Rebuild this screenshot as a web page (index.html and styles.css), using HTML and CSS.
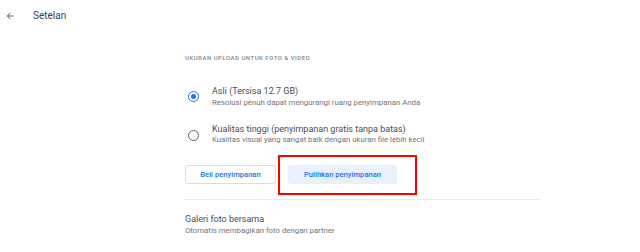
FILE: index.html
```html
<!DOCTYPE html>
<html lang="id">
<head>
  <meta charset="UTF-8">
  <meta name="viewport" content="width=device-width, initial-scale=1.0">
  <title>Setelan</title>
  <link rel="stylesheet" href="styles.css">
</head>
<body>
  <!-- Top bar -->
  <header class="topbar">
    <svg class="back-icon" viewBox="0 0 24 24" width="10" height="10" aria-hidden="true">
      <path d="M20 11H7.83l5.59-5.59L12 4l-8 8 8 8 1.41-1.41L7.83 13H20v-2z" fill="#5f6368"/>
    </svg>
    <span class="page-title">Setelan</span>
  </header>

  <main class="content">
    <h2 class="section-label">Ukuran upload untuk foto &amp; video</h2>

    <!-- Upload size options -->
    <div class="option option-first">
      <span class="radio radio-checked"></span>
      <div class="option-text">
        <div class="option-title">Asli (Tersisa 12.7 GB)</div>
        <div class="option-sub">Resolusi penuh dapat mengurangi ruang penyimpanan Anda</div>
      </div>
    </div>

    <div class="option">
      <span class="radio"></span>
      <div class="option-text">
        <div class="option-title">Kualitas tinggi (penyimpanan gratis tanpa batas)</div>
        <div class="option-sub">Kualitas visual yang sangat baik dengan ukuran file lebih kecil</div>
      </div>
    </div>

    <div class="actions">
      <button class="btn btn-outline">Beli penyimpanan</button>
      <div class="highlight-wrap">
        <button class="btn btn-tonal">Pulihkan penyimpanan</button>
        <span class="highlight-box"></span>
      </div>
    </div>

    <hr class="divider">

    <!-- Shared library -->
    <div class="setting">
      <div class="option-title">Galeri foto bersama</div>
      <div class="option-sub">Otomatis membagikan foto dengan partner</div>
    </div>
  </main>
</body>
</html>
```

FILE: styles.css
```css
body {
  margin: 0;
  background-color: #ffffff;
  font-family: Roboto, "Liberation Sans", Arial, sans-serif;
  color: #3c4043;
}

.topbar {
  height: 31px;
  display: flex;
  align-items: center;
  padding-left: 5px;
}

.back-icon {
  display: block;
}

.page-title {
  margin-left: 18px;
  font-size: 10px;
  color: #3c4043;
}

.content {
  margin-left: 185px;
  width: 355px;
}

.section-label {
  margin: 22px 0 0 0;
  font-size: 6px;
  line-height: 10px;
  font-weight: 500;
  letter-spacing: 0.5px;
  text-transform: uppercase;
  color: #80868b;
}

.option {
  display: flex;
  align-items: center;
  margin-top: 14px;
}

.option-first {
  margin-top: 22px;
}

.radio {
  box-sizing: border-box;
  width: 11px;
  height: 11px;
  margin-left: 3px;
  margin-right: 13px;
  margin-top: 2px;
  border: 1.5px solid #5f6368;
  border-radius: 50%;
  flex-shrink: 0;
  position: relative;
}

.radio-checked {
  border-color: #1a73e8;
  margin-top: 0;
}

.radio-checked::after {
  content: "";
  position: absolute;
  left: 1.5px;
  top: 1.5px;
  width: 5px;
  height: 5px;
  border-radius: 50%;
  background-color: #1a73e8;
}

.option-title {
  font-size: 9px;
  line-height: 12px;
  color: #4a4e52;
}

.option-sub {
  margin-top: -0.5px;
  font-size: 7.8px;
  line-height: 12px;
  color: #70757a;
}

.actions {
  display: flex;
  align-items: center;
  gap: 12px;
  margin-top: 19px;
}

.btn {
  box-sizing: border-box;
  height: 19px;
  padding: 0 10px;
  border-radius: 3px;
  font-family: Roboto, "Liberation Sans", Arial, sans-serif;
  font-size: 7.6px;
  font-weight: 500;
  color: #1a73e8;
  cursor: pointer;
}

.btn-outline {
  width: 91px;
  background-color: #ffffff;
  border: 1px solid #dadce0;
}

.btn-tonal {
  width: 109px;
  background-color: #e8f0fe;
  border: none;
}

.highlight-wrap {
  position: relative;
  display: flex;
}

.highlight-box {
  position: absolute;
  left: -10px;
  top: -10px;
  width: 139px;
  height: 40px;
  box-sizing: border-box;
  border: 2px solid #ff0000;
  pointer-events: none;
}

.divider {
  margin: 15px 0 0 0;
  border: none;
  border-top: 1px solid #e8eaed;
}

.setting {
  margin-top: 13px;
}
```
